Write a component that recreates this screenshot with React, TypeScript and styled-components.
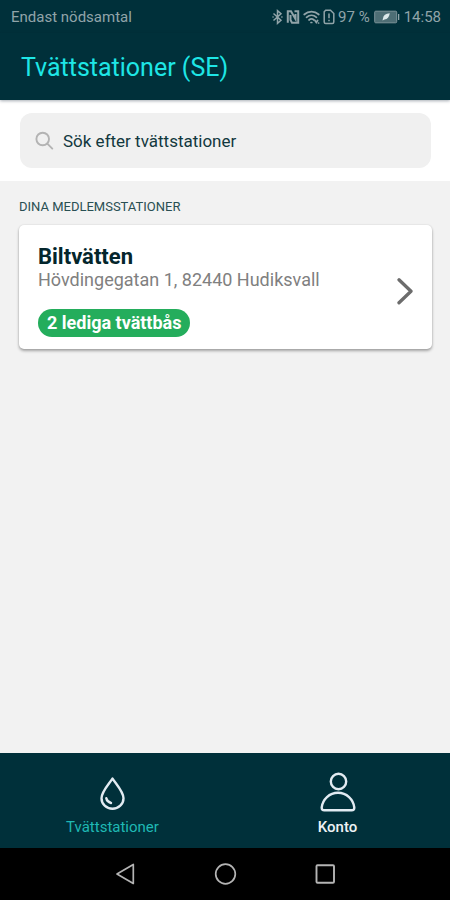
import React from "react";
import styled, { createGlobalStyle } from "styled-components";

const GlobalStyle = createGlobalStyle`
  *, *::before, *::after { box-sizing: border-box; }
  body {
    margin: 0;
    background: #f2f2f2;
    font-family: Roboto, "Liberation Sans", sans-serif;
  }
  button, input { font-family: inherit; }
`;

const Screen = styled.div`
  min-height: 100vh;
  display: flex;
  flex-direction: column;
  background: #f2f2f2;
`;

const StatusBar = styled.div`
  display: flex;
  align-items: center;
  justify-content: space-between;
  height: 33px;
  padding: 0 9px 0 11px;
  background: #00303a;
  color: #91a4a9;
  font-size: 15px;
  line-height: 18px;
`;

const StatusGroup = styled.div<{ $gap: number }>`
  display: flex;
  align-items: center;
  gap: ${({ $gap }) => $gap}px;
`;

const Header = styled.header`
  position: relative;
  display: flex;
  align-items: center;
  height: 67px;
  padding: 2px 21px 0;
  background: #00303a;
  box-shadow: 0 1px 3px rgba(0, 20, 40, 0.35);
`;

const Title = styled.h1`
  margin: 0;
  color: #1ee6e6;
  font-size: 25px;
  font-weight: 400;
  line-height: 32px;
`;

const SearchArea = styled.div`
  padding: 13px 19px 13px 20px;
  background: #ffffff;
`;

const SearchField = styled.label`
  display: flex;
  align-items: center;
  gap: 8px;
  height: 55px;
  padding: 0 14px;
  border-radius: 12px;
  background: #f0f0f0;
`;

const SearchInput = styled.input`
  flex: 1;
  min-width: 0;
  padding: 0;
  border: 0;
  outline: 0;
  background: transparent;
  color: #12383e;
  font-size: 17px;
  line-height: 24px;

  &::placeholder {
    color: #12383e;
    opacity: 1;
  }
`;

const Main = styled.main`
  flex: 1;
  padding: 18px 18px 18px 19px;
`;

const SectionTitle = styled.h2`
  margin: 0 0 10px;
  color: #294f53;
  font-size: 13px;
  font-weight: 400;
  line-height: 16px;
`;

const StationCard = styled.button`
  display: flex;
  align-items: center;
  justify-content: space-between;
  width: 100%;
  padding: 19px 19px 12px;
  border: 0;
  border-radius: 5px;
  background: #ffffff;
  box-shadow: 0 2px 3px rgba(0, 0, 0, 0.32), 0 0 2px rgba(0, 0, 0, 0.12);
  text-align: left;
`;

const StationInfo = styled.span`
  display: flex;
  flex-direction: column;
  align-items: flex-start;
`;

const StationName = styled.span`
  color: #04262c;
  font-size: 22px;
  font-weight: 700;
  line-height: 26px;
`;

const StationAddress = styled.span`
  color: #808080;
  font-size: 18px;
  line-height: 20px;
`;

const Badge = styled.span`
  margin-top: 19px;
  padding: 0 9px;
  border-radius: 14px;
  background: #24ad5c;
  color: #ffffff;
  font-size: 18px;
  font-weight: 700;
  line-height: 28px;
`;

const TabBar = styled.nav`
  display: grid;
  grid-template-columns: 1fr 1fr;
  height: 95px;
  background: #00303a;
`;

const Tab = styled.button<{ $active?: boolean }>`
  display: flex;
  flex-direction: column;
  align-items: center;
  justify-content: flex-end;
  gap: 6px;
  padding: 0 0 12px;
  border: 0;
  background: transparent;
  color: ${({ $active }) => ($active ? "#1fb8b4" : "#eef3f5")};
  font-size: 15px;
  font-weight: ${({ $active }) => ($active ? 400 : 500)};
  line-height: 18px;
`;

const SystemBar = styled.div`
  display: flex;
  justify-content: center;
  height: 52px;
  background: #000000;
`;

const SystemButton = styled.button`
  display: flex;
  align-items: center;
  justify-content: center;
  width: 100px;
  padding: 0;
  border: 0;
  background: transparent;
`;

const BluetoothIcon = () => (
  <svg width="11" height="16" viewBox="0 0 11 16" fill="none" stroke="#91a4a9" strokeWidth="1.5" aria-hidden="true">
    <path d="M1.5 4.5 9 11.2 5.5 14.3V1.7L9 4.8 1.5 11.5" />
    <path d="M1 8h.1M9.8 8h.2" strokeLinecap="round" />
  </svg>
);

const NfcIcon = () => (
  <svg width="14" height="16" viewBox="0 0 14 16" fill="none" aria-hidden="true">
    <path d="M1.800 13.800V2.200H5L9.500 10V5" stroke="#91a4a9" strokeWidth="2" />
    <path d="M4.500 6v5L6 13.800H12.200V2.200H8.500" stroke="#91a4a9" strokeWidth="2" />
  </svg>
);

const WifiIcon = () => (
  <svg width="17" height="16" viewBox="0 0 17 16" fill="none" stroke="#91a4a9" strokeWidth="1.7" strokeLinecap="round" aria-hidden="true">
    <path d="M1.200 5.500c4.300-3.800 10.300-3.800 14.600 0M3.500 8.300c3-2.700 7-2.700 10 0M6 11c1.600-1.300 3.400-1.300 5 0" />
    <path d="M8 13.500h.8M12 11.500l1.300 2 1.300-2M15.500 14h.1" />
  </svg>
);

const SimAlertIcon = () => (
  <svg width="12" height="16" viewBox="0 0 12 16" fill="none" stroke="#91a4a9" strokeWidth="1.5" aria-hidden="true">
    <path d="M1.200 2.700 2.700 1.200H7.500L10.800 4.500V13q0 1.500-1.500 1.500H2.700Q1.200 14.500 1.200 13Z" />
    <path d="M6 4.500v4.700M6 10.800v1.500" />
  </svg>
);

const BatteryIcon = () => (
  <svg width="26" height="14" viewBox="0 0 26 14" fill="none" aria-hidden="true">
    <rect x="0.700" y="1.200" width="22" height="11.600" rx="1" fill="#4e6e75" stroke="#7d9399" />
    <path d="M24 4h1.300v6H24z" fill="#91a4a9" />
    <path d="M15.800 3.300Q9.500 3.800 9 8.200L8.500 10.500 10.500 9.600Q14.800 9 15.800 3.300Z" fill="#dce8ea" />
  </svg>
);

const SearchIcon = () => (
  <svg width="21" height="20" viewBox="0 0 21 20" fill="none" stroke="#b3b3b3" strokeWidth="1.900" strokeLinecap="round" aria-hidden="true">
    <circle cx="8.700" cy="8" r="6.300" />
    <path d="m13.300 12.600 5 5" />
  </svg>
);

const ChevronIcon = () => (
  <svg width="16" height="28" viewBox="0 0 16 28" fill="none" stroke="#6c6c6c" strokeWidth="3.300" strokeLinecap="round" strokeLinejoin="round" aria-hidden="true">
    <path d="m2 2.800 12 11.500L2 25.800" />
  </svg>
);

const DropIcon = () => (
  <svg width="28" height="36" viewBox="0 0 28 36" fill="none" stroke="#e2ebf2" strokeWidth="2.400" strokeLinecap="round" strokeLinejoin="round" aria-hidden="true">
    <path d="M13.500 2.500C10.500 7.500 2.500 15.500 2.500 22.300a11 10.500 0 0 0 22 0C24.500 15.500 16.500 7.500 13.500 2.500Z" />
    <path d="M7.300 22.300c.5 2.500 2 4 4.700 4.700" />
  </svg>
);

const PersonIcon = () => (
  <svg width="36" height="40" viewBox="0 0 36 40" fill="none" stroke="#e2ebf2" strokeWidth="2.400" strokeLinejoin="round" aria-hidden="true">
    <circle cx="18.500" cy="9.500" r="7.700" />
    <path d="M4.300 38.300Q1.600 38.300 1.700 35.500C2.600 27.300 9.400 20.800 18 20.800S33.400 27.300 34.300 35.500Q34.400 38.300 31.700 38.300Z" />
  </svg>
);

const BackIcon = () => (
  <svg width="24" height="24" viewBox="0 0 24 24" fill="none" stroke="#b4b4b4" strokeWidth="1.700" strokeLinejoin="round" aria-hidden="true">
    <path d="M20.300 2.500v19L4 12Z" />
  </svg>
);

const HomeIcon = () => (
  <svg width="24" height="24" viewBox="0 0 24 24" fill="none" stroke="#b4b4b4" strokeWidth="1.700" aria-hidden="true">
    <circle cx="12.500" cy="12" r="9.800" />
  </svg>
);

const RecentIcon = () => (
  <svg width="24" height="24" viewBox="0 0 24 24" fill="none" stroke="#b4b4b4" strokeWidth="1.900" aria-hidden="true">
    <rect x="3.500" y="3.300" width="17.500" height="17.500" rx="1" />
  </svg>
);

export default function App() {
  return (
    <Screen>
      <GlobalStyle />
      <StatusBar>
        <span>Endast nödsamtal</span>
        <StatusGroup $gap={4}>
          <StatusGroup $gap={3}>
            <BluetoothIcon />
            <NfcIcon />
            <WifiIcon />
            <SimAlertIcon />
            <span>97 %</span>
          </StatusGroup>
          <BatteryIcon />
          <span>14:58</span>
        </StatusGroup>
      </StatusBar>
      <Header>
        <Title>Tvättstationer (SE)</Title>
      </Header>
      <SearchArea>
        <SearchField>
          <SearchIcon />
          <SearchInput type="search" placeholder="Sök efter tvättstationer" aria-label="Sök efter tvättstationer" />
        </SearchField>
      </SearchArea>
      <Main>
        <SectionTitle>DINA MEDLEMSSTATIONER</SectionTitle>
        <StationCard type="button">
          <StationInfo>
            <StationName>Biltvätten</StationName>
            <StationAddress>Hövdingegatan 1, 82440 Hudiksvall</StationAddress>
            <Badge>2 lediga tvättbås</Badge>
          </StationInfo>
          <ChevronIcon />
        </StationCard>
      </Main>
      <TabBar>
        <Tab type="button" $active aria-current="page">
          <DropIcon />
          Tvättstationer
        </Tab>
        <Tab type="button">
          <PersonIcon />
          Konto
        </Tab>
      </TabBar>
      <SystemBar>
        <SystemButton type="button" aria-label="Tillbaka">
          <BackIcon />
        </SystemButton>
        <SystemButton type="button" aria-label="Hem">
          <HomeIcon />
        </SystemButton>
        <SystemButton type="button" aria-label="Senaste appar">
          <RecentIcon />
        </SystemButton>
      </SystemBar>
    </Screen>
  );
}
